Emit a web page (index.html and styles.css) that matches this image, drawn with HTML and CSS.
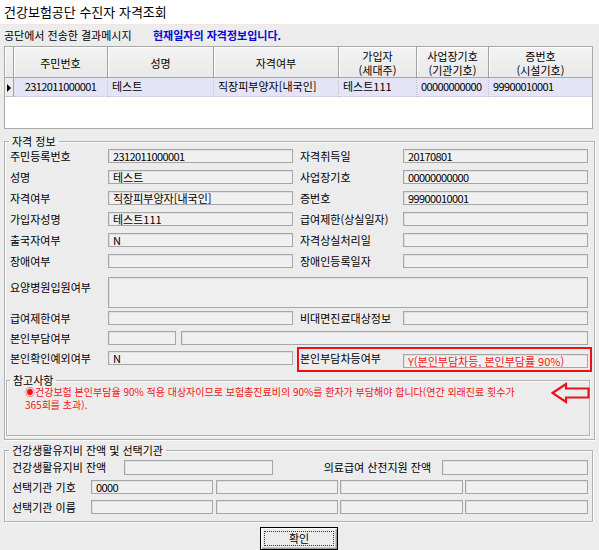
FILE: index.html
```html
<!DOCTYPE html>
<html lang="ko">
<head>
<meta charset="utf-8">
<title>건강보험공단 수진자 자격조회</title>
<link rel="stylesheet" href="styles.css">
</head>
<body>
<div class="titlebar">건강보험공단 수진자 자격조회</div>
<div class="msgline"><span class="msg-label">공단에서 전송한 결과메시지</span><b class="msg-blue">현재일자의 자격정보입니다.</b></div>

<div class="grid">
  <div class="grid-head">
    <div class="hc rh"></div>
    <div class="hc">주민번호</div>
    <div class="hc">성명</div>
    <div class="hc">자격여부</div>
    <div class="hc">가입자<br>(세대주)</div>
    <div class="hc">사업장기호<br>(기관기호)</div>
    <div class="hc">증번호<br>(시설기호)</div>
  </div>
  <div class="grid-row">
    <div class="dc rh"><span class="tri"></span></div>
    <div class="dc center num">2312011000001</div>
    <div class="dc">테스트</div>
    <div class="dc">직장피부양자[내국인]</div>
    <div class="dc">테스트111</div>
    <div class="dc num">00000000000</div>
    <div class="dc num">99900010001</div>
  </div>
</div>

<fieldset class="fs fs-info">
  <legend>자격 정보</legend>
  <div class="r">
    <span class="lb">주민등록번호</span><span class="tb num">2312011000001</span>
    <span class="lb c4">자격취득일</span><span class="tb c5 num">20170801</span>
  </div>
  <div class="r">
    <span class="lb">성명</span><span class="tb">테스트</span>
    <span class="lb c4">사업장기호</span><span class="tb c5 num">00000000000</span>
  </div>
  <div class="r">
    <span class="lb">자격여부</span><span class="tb">직장피부양자[내국인]</span>
    <span class="lb c4">증번호</span><span class="tb c5 num">99900010001</span>
  </div>
  <div class="r">
    <span class="lb">가입자성명</span><span class="tb">테스트111</span>
    <span class="lb c4">급여제한(상실일자)</span><span class="tb c5"></span>
  </div>
  <div class="r">
    <span class="lb">출국자여부</span><span class="tb">N</span>
    <span class="lb c4">자격상실처리일</span><span class="tb c5"></span>
  </div>
  <div class="r r6">
    <span class="lb">장애여부</span><span class="tb"></span>
    <span class="lb c4">장애인등록일자</span><span class="tb c5"></span>
  </div>
  <div class="r r7">
    <span class="lb lb-top">요양병원입원여부</span><span class="tb tb-wide"></span>
  </div>
  <div class="r r8">
    <span class="lb">급여제한여부</span><span class="tb"></span>
    <span class="lb c4">비대면진료대상정보</span><span class="tb c5"></span>
  </div>
  <div class="r r9">
    <span class="lb">본인부담여부</span>
    <span class="split"><span class="tb tb-small"></span><span class="tb tb-rest"></span></span>
  </div>
  <div class="r r10">
    <span class="lb">본인확인예외여부</span><span class="tb">N</span>
    <span class="hl">
      <span class="lb">본인부담차등여부</span><span class="tb tb-red">Y(본인부담차등, 본인부담률 90%)</span>
    </span>
  </div>

  <fieldset class="fs fs-note">
    <legend>참고사항</legend>
    <div class="note">
      <span class="bullet">◉</span>건강보험 본인부담율 90% 적용 대상자이므로 보험총진료비의 90%를 환자가 부담해야 합니다(연간 외래진료 횟수가<br>365회를 초과).
      <svg class="arrow" width="40" height="22" viewBox="0 0 40 22" aria-hidden="true">
        <polygon points="1.5,11 15,2 15,6.5 37.5,6.5 37.5,15.5 15,15.5 15,20" fill="none" stroke="#e8141c" stroke-width="2.2" stroke-linejoin="miter"/>
      </svg>
    </div>
  </fieldset>
</fieldset>

<fieldset class="fs fs-bal">
  <legend>건강생활유지비 잔액 및 선택기관</legend>
  <div class="b-row1">
    <span class="lb">건강생활유지비 잔액</span><span class="tb"></span>
    <span class="lb lb-right">의료급여 산전지원 잔액</span><span class="tb"></span>
  </div>
  <div class="b-row b-row2">
    <span class="lb">선택기관 기호</span><span class="tb num">0000</span><span></span><span class="tb"></span><span></span><span class="tb"></span><span></span><span class="tb"></span>
  </div>
  <div class="b-row">
    <span class="lb">선택기관 이름</span><span class="tb"></span><span></span><span class="tb"></span><span></span><span class="tb"></span><span></span><span class="tb"></span>
  </div>
</fieldset>

<div class="btn-wrap"><button class="btn" type="button">확인</button></div>
</body>
</html>
```
FILE: styles.css
```css
* { box-sizing: border-box; }
html, body { margin: 0; padding: 0; }
body {
  width: 599px;
  height: 550px;
  overflow: hidden;
  background: #ececec;
  color: #000;
  font-family: "Noto Sans CJK KR", "Noto Sans", sans-serif;
  font-size: 11px;
  line-height: 14px;
}

.titlebar {
  height: 25px;
  background: #fff;
  border-bottom: 1px solid #f4e4e4;
  font-size: 13px;
  line-height: 24px;
  padding-left: 4px;
}

.msgline {
  height: 21px;
  line-height: 21px;
  padding-left: 4px;
  white-space: nowrap;
}
.msg-label { display: inline-block; width: 149px; }
.msg-blue { color: #0a0ad2; font-weight: bold; }

.num { letter-spacing: -0.6px; }

/* data grid */
.grid {
  margin: 0 6px 0 4px;
  height: 83px;
  border: 1px solid #a8a8a8;
  background: #fff;
}
.grid-head, .grid-row {
  display: grid;
  grid-template-columns: 9px 94px 106px 125px 78px 72px 103px;
}
.grid-head {
  height: 31px;
  background: linear-gradient(#f3f3f3, #e9e9e9);
  border-bottom: 1px solid #a8a8a8;
}
.hc {
  display: flex;
  align-items: center;
  justify-content: center;
  text-align: center;
  line-height: 14px;
  border-right: 1px solid #a0a0a0;
  box-shadow: inset 1px 1px 0 #fff;
  padding-top: 1px;
}
.hc:last-child { border-right: 0; }
.grid-row {
  height: 19px;
  background: #e4e4f6;
}
.dc {
  line-height: 17px;
  padding-left: 4px;
  white-space: nowrap;
  overflow: hidden;
  border-right: 1px dotted #c4c4d4;
  border-bottom: 1px dotted #c4c4d4;
}
.dc:last-child { border-right: 0; }
.dc.center { text-align: center; padding-left: 0; }
.dc.rh {
  background: #ececec;
  border-right: 1px solid #a0a0a0;
  border-bottom: 1px solid #c8c8c8;
  padding-left: 0;
  display: flex;
  align-items: center;
  justify-content: center;
}
.tri {
  width: 0;
  height: 0;
  border-top: 4px solid transparent;
  border-bottom: 4px solid transparent;
  border-left: 4px solid #000;
  margin-top: 2px;
}

/* fieldsets */
.fs {
  min-width: 0;
  border: 1px solid #b0b0b0;
  box-shadow: inset 1px 1px 0 #fafafa, 1px 1px 0 #fafafa;
}
.fs legend {
  padding: 0 3px;
  line-height: 14px;
  font-size: 11px;
}
.fs-info {
  margin: 5px 4px 0 4px;
  padding: 1px 6px 3px 5px;
}
.fs-info > legend { margin-left: -1px; }

.r {
  display: grid;
  grid-template-columns: 98px 185px 7px 103px 185px;
  grid-template-rows: 14px;
  margin-bottom: 7px;
  white-space: nowrap;
}
.r6 { margin-bottom: 9px; }
.r7 { grid-template-rows: 31px; margin-bottom: 3px; }
.r8, .r9 { margin-bottom: 6px; }
.r10 { margin-bottom: 0; }

.lb { line-height: 14px; white-space: nowrap; }
.lb-top { padding-top: 3px; }
.c4 { grid-column: 4; }
.c5 { grid-column: 5; }

.tb {
  display: block;
  height: 14px;
  border: 1px solid #a6a6a6;
  background: #f0f0f0;
  box-shadow: inset 1px 1px 0 #e0e0e0;
  padding-left: 4px;
  line-height: 12px;
  white-space: nowrap;
  overflow: hidden;
}
.tb-wide { grid-column: 2 / 6; height: 31px; }
.split {
  grid-column: 2 / 6;
  display: flex;
  gap: 5px;
}
.tb-small { width: 68px; }
.tb-rest { flex: 1; }

.hl {
  grid-column: 4 / 6;
  display: grid;
  grid-template-columns: 103px 185px;
  grid-template-rows: 14px;
  position: relative;
}
.hl::after {
  content: "";
  position: absolute;
  top: -4px;
  left: -3px;
  right: -4px;
  bottom: -7px;
  border: 2px solid #ee1111;
  pointer-events: none;
}
.tb-red { color: #f01818; margin-top: 3px; }

.fs-note {
  margin: 9px -2px 0 -4px;
  padding: 0 0 0 18px;
}
.fs-note > legend { margin-left: -15px; line-height: 12px; }
.note {
  position: relative;
  height: 50px;
  margin-top: -1px;
  color: #f01414;
  font-size: 10px;
  line-height: 13px;
  white-space: nowrap;
}
.bullet { font-size: 10px; }
.arrow {
  position: absolute;
  left: 526px;
  top: -3px;
}

.fs-bal {
  margin: 3px 6px 0 4px;
  padding: 3px 4px 7px 7px;
}
.fs-bal > legend { margin-left: -3px; }
.b-row1 {
  display: grid;
  grid-template-columns: 112px 149px 169px 146px;
  grid-template-rows: 15px;
  margin-bottom: 5px;
}
.b-row1 .tb { height: 15px; }
.lb-right { text-align: right; padding-right: 11px; line-height: 15px; }
.b-row {
  display: grid;
  grid-template-columns: 79px 122px 3px 122px 2px 123px 2px 123px;
  grid-template-rows: 14px;
}
.b-row2 { margin-bottom: 6px; }

.btn-wrap {
  display: flex;
  justify-content: center;
  padding-right: 1px;
  margin-top: 5px;
}
.btn {
  position: relative;
  width: 78px;
  height: 23px;
  margin: 0;
  padding: 0 0 2px;
  font-family: inherit;
  font-size: 11px;
  line-height: 14px;
  color: #000;
  background: #ececec;
  border: 1px solid #000;
  box-shadow: inset 1px 1px 0 #fff, inset -1px -1px 0 #9a9a9a, inset -2px -2px 0 #c8c8c8;
}
.btn::after {
  content: "";
  position: absolute;
  top: 3px;
  left: 3px;
  right: 3px;
  bottom: 3px;
  border: 1px dotted #333;
}
```
